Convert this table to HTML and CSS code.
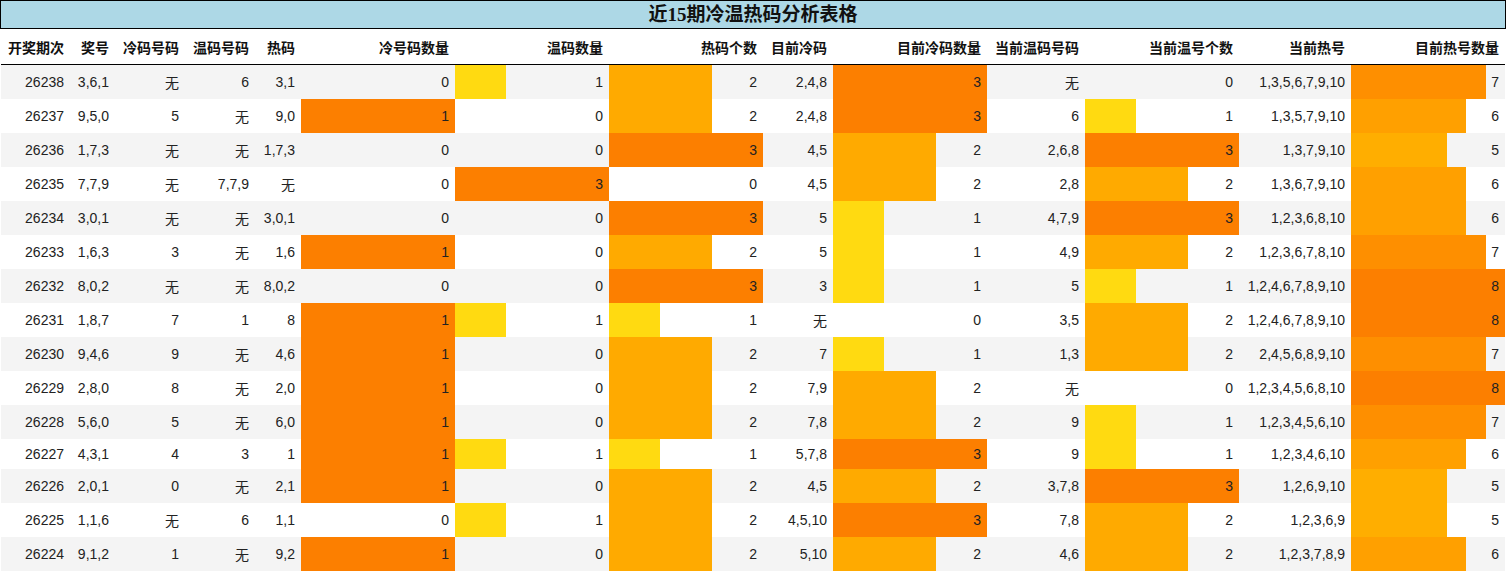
FILE: index.html
```html
<!DOCTYPE html>
<html lang="zh">
<head>
<meta charset="utf-8">
<title>近15期冷温热码分析表格</title>
<link rel="stylesheet" href="styles.css">
</head>
<body>
<div class="sheet">
  <div class="title">近15期冷温热码分析表格</div>
  <table class="grid">
    <colgroup>
      <col class="c69"><col class="c45"><col class="c70"><col class="c70"><col class="c46">
      <col class="c154"><col class="c154"><col class="c154"><col class="c70"><col class="c154">
      <col class="c98"><col class="c154"><col class="c112"><col class="c154">
    </colgroup>
    <thead>
      <tr>
        <th>开奖期次</th><th>奖号</th><th>冷码号码</th><th>温码号码</th><th>热码</th>
        <th>冷号码数量</th><th>温码数量</th><th>热码个数</th><th>目前冷码</th><th>目前冷码数量</th>
        <th>当前温码号码</th><th>当前温号个数</th><th>当前热号</th><th>目前热号数量</th>
      </tr>
    </thead>
    <tbody>
      <tr><td>26238</td><td>3,6,1</td><td>无</td><td>6</td><td>3,1</td>
        <td>0</td><td class="bar" style="--w:33.333%;--c:#ffda11">1</td><td class="bar" style="--w:66.667%;--c:#ffaa00">2</td><td>2,4,8</td><td class="bar" style="--w:100%;--c:#fc7f00">3</td>
        <td>无</td><td>0</td><td>1,3,5,6,7,9,10</td><td class="bar" style="--w:87.5%;--c:#fe8f00">7</td></tr>
      <tr><td>26237</td><td>9,5,0</td><td>5</td><td>无</td><td>9,0</td>
        <td class="bar" style="--w:100%;--c:#fc7f00">1</td><td>0</td><td class="bar" style="--w:66.667%;--c:#ffaa00">2</td><td>2,4,8</td><td class="bar" style="--w:100%;--c:#fc7f00">3</td>
        <td>6</td><td class="bar" style="--w:33.333%;--c:#ffda11">1</td><td>1,3,5,7,9,10</td><td class="bar" style="--w:75%;--c:#ffa000">6</td></tr>
      <tr><td>26236</td><td>1,7,3</td><td>无</td><td>无</td><td>1,7,3</td>
        <td>0</td><td>0</td><td class="bar" style="--w:100%;--c:#fc7f00">3</td><td>4,5</td><td class="bar" style="--w:66.667%;--c:#ffaa00">2</td>
        <td>2,6,8</td><td class="bar" style="--w:100%;--c:#fc7f00">3</td><td>1,3,7,9,10</td><td class="bar" style="--w:62.5%;--c:#ffae00">5</td></tr>
      <tr><td>26235</td><td>7,7,9</td><td>无</td><td>7,7,9</td><td>无</td>
        <td>0</td><td class="bar" style="--w:100%;--c:#fc7f00">3</td><td>0</td><td>4,5</td><td class="bar" style="--w:66.667%;--c:#ffaa00">2</td>
        <td>2,8</td><td class="bar" style="--w:66.667%;--c:#ffaa00">2</td><td>1,3,6,7,9,10</td><td class="bar" style="--w:75%;--c:#ffa000">6</td></tr>
      <tr><td>26234</td><td>3,0,1</td><td>无</td><td>无</td><td>3,0,1</td>
        <td>0</td><td>0</td><td class="bar" style="--w:100%;--c:#fc7f00">3</td><td>5</td><td class="bar" style="--w:33.333%;--c:#ffda11">1</td>
        <td>4,7,9</td><td class="bar" style="--w:100%;--c:#fc7f00">3</td><td>1,2,3,6,8,10</td><td class="bar" style="--w:75%;--c:#ffa000">6</td></tr>
      <tr><td>26233</td><td>1,6,3</td><td>3</td><td>无</td><td>1,6</td>
        <td class="bar" style="--w:100%;--c:#fc7f00">1</td><td>0</td><td class="bar" style="--w:66.667%;--c:#ffaa00">2</td><td>5</td><td class="bar" style="--w:33.333%;--c:#ffda11">1</td>
        <td>4,9</td><td class="bar" style="--w:66.667%;--c:#ffaa00">2</td><td>1,2,3,6,7,8,10</td><td class="bar" style="--w:87.5%;--c:#fe8f00">7</td></tr>
      <tr><td>26232</td><td>8,0,2</td><td>无</td><td>无</td><td>8,0,2</td>
        <td>0</td><td>0</td><td class="bar" style="--w:100%;--c:#fc7f00">3</td><td>3</td><td class="bar" style="--w:33.333%;--c:#ffda11">1</td>
        <td>5</td><td class="bar" style="--w:33.333%;--c:#ffda11">1</td><td>1,2,4,6,7,8,9,10</td><td class="bar" style="--w:100%;--c:#fc7f00">8</td></tr>
      <tr><td>26231</td><td>1,8,7</td><td>7</td><td>1</td><td>8</td>
        <td class="bar" style="--w:100%;--c:#fc7f00">1</td><td class="bar" style="--w:33.333%;--c:#ffda11">1</td><td class="bar" style="--w:33.333%;--c:#ffda11">1</td><td>无</td><td>0</td>
        <td>3,5</td><td class="bar" style="--w:66.667%;--c:#ffaa00">2</td><td>1,2,4,6,7,8,9,10</td><td class="bar" style="--w:100%;--c:#fc7f00">8</td></tr>
      <tr><td>26230</td><td>9,4,6</td><td>9</td><td>无</td><td>4,6</td>
        <td class="bar" style="--w:100%;--c:#fc7f00">1</td><td>0</td><td class="bar" style="--w:66.667%;--c:#ffaa00">2</td><td>7</td><td class="bar" style="--w:33.333%;--c:#ffda11">1</td>
        <td>1,3</td><td class="bar" style="--w:66.667%;--c:#ffaa00">2</td><td>2,4,5,6,8,9,10</td><td class="bar" style="--w:87.5%;--c:#fe8f00">7</td></tr>
      <tr><td>26229</td><td>2,8,0</td><td>8</td><td>无</td><td>2,0</td>
        <td class="bar" style="--w:100%;--c:#fc7f00">1</td><td>0</td><td class="bar" style="--w:66.667%;--c:#ffaa00">2</td><td>7,9</td><td class="bar" style="--w:66.667%;--c:#ffaa00">2</td>
        <td>无</td><td>0</td><td>1,2,3,4,5,6,8,10</td><td class="bar" style="--w:100%;--c:#fc7f00">8</td></tr>
      <tr><td>26228</td><td>5,6,0</td><td>5</td><td>无</td><td>6,0</td>
        <td class="bar" style="--w:100%;--c:#fc7f00">1</td><td>0</td><td class="bar" style="--w:66.667%;--c:#ffaa00">2</td><td>7,8</td><td class="bar" style="--w:66.667%;--c:#ffaa00">2</td>
        <td>9</td><td class="bar" style="--w:33.333%;--c:#ffda11">1</td><td>1,2,3,4,5,6,10</td><td class="bar" style="--w:87.5%;--c:#fe8f00">7</td></tr>
      <tr><td>26227</td><td>4,3,1</td><td>4</td><td>3</td><td>1</td>
        <td class="bar" style="--w:100%;--c:#fc7f00">1</td><td class="bar" style="--w:33.333%;--c:#ffda11">1</td><td class="bar" style="--w:33.333%;--c:#ffda11">1</td><td>5,7,8</td><td class="bar" style="--w:100%;--c:#fc7f00">3</td>
        <td>9</td><td class="bar" style="--w:33.333%;--c:#ffda11">1</td><td>1,2,3,4,6,10</td><td class="bar" style="--w:75%;--c:#ffa000">6</td></tr>
      <tr><td>26226</td><td>2,0,1</td><td>0</td><td>无</td><td>2,1</td>
        <td class="bar" style="--w:100%;--c:#fc7f00">1</td><td>0</td><td class="bar" style="--w:66.667%;--c:#ffaa00">2</td><td>4,5</td><td class="bar" style="--w:66.667%;--c:#ffaa00">2</td>
        <td>3,7,8</td><td class="bar" style="--w:100%;--c:#fc7f00">3</td><td>1,2,6,9,10</td><td class="bar" style="--w:62.5%;--c:#ffae00">5</td></tr>
      <tr><td>26225</td><td>1,1,6</td><td>无</td><td>6</td><td>1,1</td>
        <td>0</td><td class="bar" style="--w:33.333%;--c:#ffda11">1</td><td class="bar" style="--w:66.667%;--c:#ffaa00">2</td><td>4,5,10</td><td class="bar" style="--w:100%;--c:#fc7f00">3</td>
        <td>7,8</td><td class="bar" style="--w:66.667%;--c:#ffaa00">2</td><td>1,2,3,6,9</td><td class="bar" style="--w:62.5%;--c:#ffae00">5</td></tr>
      <tr><td>26224</td><td>9,1,2</td><td>1</td><td>无</td><td>9,2</td>
        <td class="bar" style="--w:100%;--c:#fc7f00">1</td><td>0</td><td class="bar" style="--w:66.667%;--c:#ffaa00">2</td><td>5,10</td><td class="bar" style="--w:66.667%;--c:#ffaa00">2</td>
        <td>4,6</td><td class="bar" style="--w:66.667%;--c:#ffaa00">2</td><td>1,2,3,7,8,9</td><td class="bar" style="--w:75%;--c:#ffa000">6</td></tr>
    </tbody>
  </table>
</div>
</body>
</html>
```

FILE: styles.css
```css
html, body {
  margin: 0;
  padding: 0;
  background: #ffffff;
}

.sheet {
  width: 1506px;
  font-family: "Liberation Sans", "Noto Sans CJK SC", sans-serif;
  font-size: 14px;
  color: #222;
}

.title {
  height: 27px;
  line-height: 27px;
  border: 1px solid #000;
  background: #add8e6;
  text-align: center;
  font-family: "Liberation Serif", "Noto Sans CJK SC", serif;
  font-size: 19px;
  font-weight: bold;
  color: #111;
}

.grid {
  width: 1504px;
  margin: 0 1px;
  border-collapse: collapse;
  table-layout: fixed;
}

.c69 { width: 69px; }
.c45 { width: 45px; }
.c46 { width: 46px; }
.c70 { width: 70px; }
.c98 { width: 98px; }
.c112 { width: 112px; }
.c154 { width: 154px; }

.grid th {
  padding: 8px 6px 7px 0;
  text-align: right;
  font-weight: bold;
  color: #111;
  white-space: nowrap;
  border-bottom: 1px solid #000;
  background: #fff;
}

.grid td {
  padding: 7px 6px 7px 0;
  text-align: right;
  white-space: nowrap;
}

.grid tbody tr:nth-child(odd) {
  background: #f4f4f4;
}

.grid tbody tr:nth-child(even) {
  background: #fff;
}

.grid td.bar {
  background: linear-gradient(90deg, var(--c) var(--w), transparent var(--w));
}
```
